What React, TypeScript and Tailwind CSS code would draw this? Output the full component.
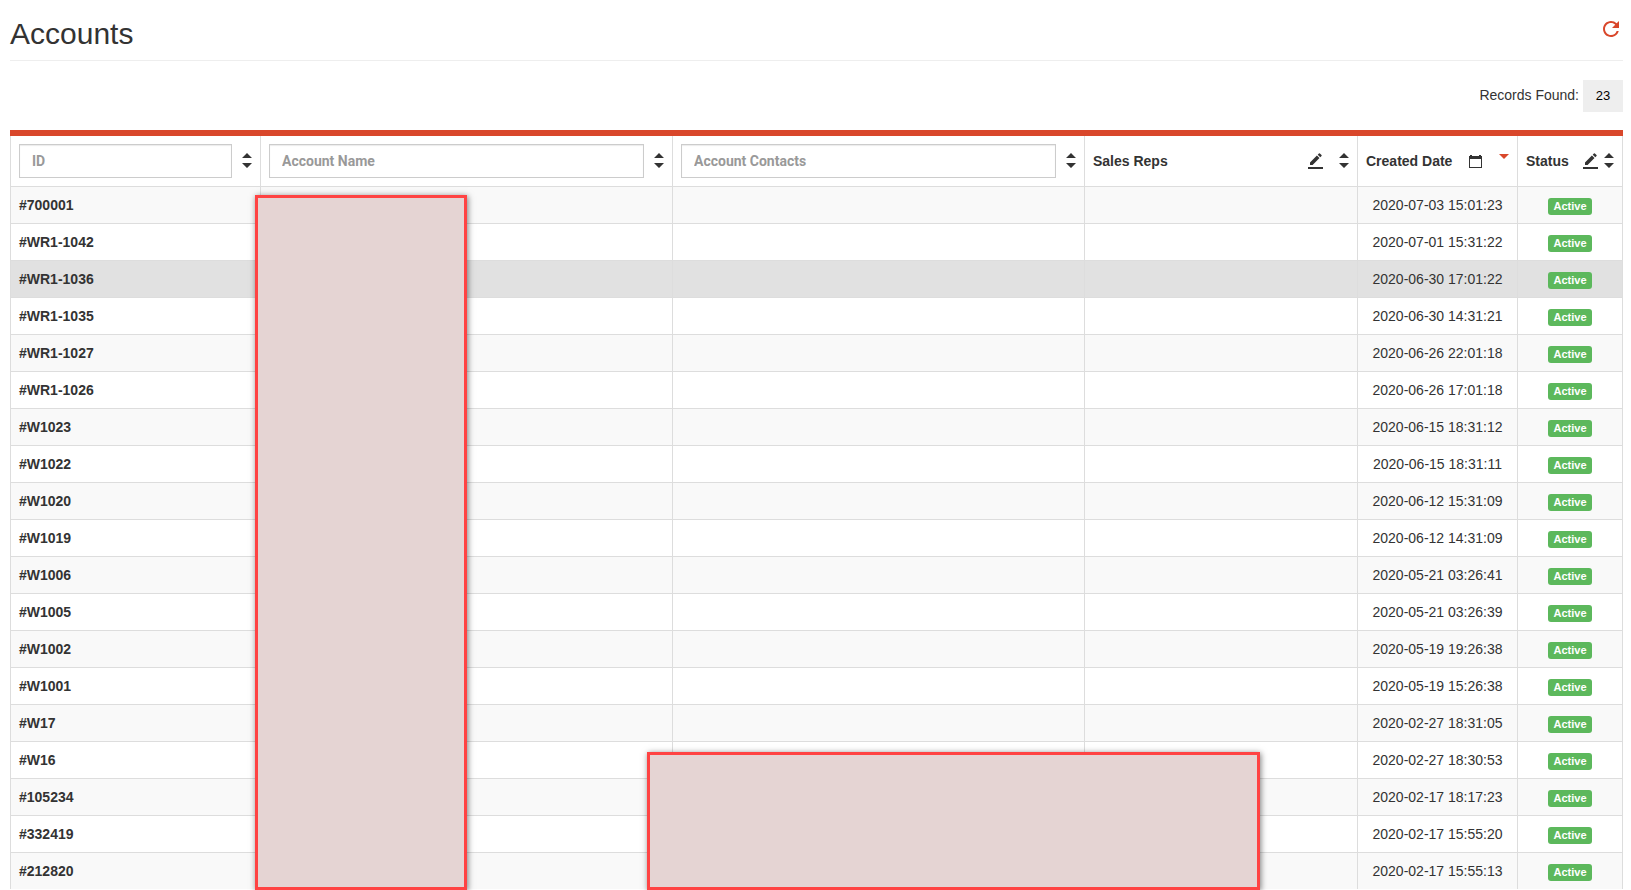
import { useState } from "react";
import { MdRefresh } from "react-icons/md";

const accounts = [
  { id: "#700001", created: "2020-07-03 15:01:23" },
  { id: "#WR1-1042", created: "2020-07-01 15:31:22" },
  { id: "#WR1-1036", created: "2020-06-30 17:01:22" },
  { id: "#WR1-1035", created: "2020-06-30 14:31:21" },
  { id: "#WR1-1027", created: "2020-06-26 22:01:18" },
  { id: "#WR1-1026", created: "2020-06-26 17:01:18" },
  { id: "#W1023", created: "2020-06-15 18:31:12" },
  { id: "#W1022", created: "2020-06-15 18:31:11" },
  { id: "#W1020", created: "2020-06-12 15:31:09" },
  { id: "#W1019", created: "2020-06-12 14:31:09" },
  { id: "#W1006", created: "2020-05-21 03:26:41" },
  { id: "#W1005", created: "2020-05-21 03:26:39" },
  { id: "#W1002", created: "2020-05-19 19:26:38" },
  { id: "#W1001", created: "2020-05-19 15:26:38" },
  { id: "#W17", created: "2020-02-27 18:31:05" },
  { id: "#W16", created: "2020-02-27 18:30:53" },
  { id: "#105234", created: "2020-02-17 18:17:23" },
  { id: "#332419", created: "2020-02-17 15:55:20" },
  { id: "#212820", created: "2020-02-17 15:55:13" },
];

const SortButton = ({ label }: { label: string }) => (
  <button aria-label={`Sort by ${label}`} className="shrink-0">
    <svg width="10" height="16" viewBox="0 0 10 16" fill="#333">
      <path d="M5 0 10 5H0ZM5 15 10 10H0Z" />
    </svg>
  </button>
);

const EditButton = ({ label }: { label: string }) => (
  <button aria-label={`Filter ${label}`} className="shrink-0">
    <svg width="15" height="16" viewBox="0 0 15 16" fill="#333">
      <path d="M0 14H15V16H0Z" />
      <path d="M2 12V9.4L8.9 2.5 11.5 5.1 4.6 12ZM9.7 1.7 10.9 0.5Q11.4 0 11.9 0.5L13.5 2.1Q14 2.6 13.5 3.1L12.3 4.3Z" />
    </svg>
  </button>
);

// Header cell with a search box
const FilterHead = ({ label }: { label: string }) => {
  const [value, setValue] = useState("");

  return (
    <th className="border-r border-b border-[#ddd] p-2">
      <div className="flex items-center gap-2.5">
        <input
          aria-label={label}
          value={value}
          onChange={(e) => setValue(e.target.value)}
          placeholder={label}
          className="h-[34px] w-full min-w-0 border border-[#ccc] px-3 font-['Roboto',sans-serif] font-bold shadow-[inset_0_1px_1px_rgba(0,0,0,0.08)] placeholder:text-[#999]"
        />
        <SortButton label={label} />
      </div>
    </th>
  );
};

const App = () => {
  return (
    <div className="bg-white pr-2 pl-2.5 font-['Liberation_Sans',Arial,sans-serif] text-sm text-[#333]">
      <header className="flex h-[61px] items-center justify-between border-b border-[#eee]">
        <h1 className="pt-2 text-[30px] leading-9">Accounts</h1>
        <button aria-label="Refresh" className="pb-0.5 text-[#d9472b]">
          <MdRefresh size={24} />
        </button>
      </header>

      <div className="mt-[19px] mb-[18px] flex items-start justify-end gap-1">
        <span className="py-[5px]">Records Found:</span>
        <span className="w-10 bg-[#eee] py-1.5 text-center text-[13px] leading-5 text-black">
          23
        </span>
      </div>

      <div className="relative border-t-[6px] border-[#d9472b] pb-px">
        <table className="w-full table-fixed border-separate border-spacing-0 border-l border-[#ddd]">
          <colgroup>
            <col className="w-[250px]" />
            <col />
            <col />
            <col className="w-[273px]" />
            <col className="w-[160px]" />
            <col className="w-[105px]" />
          </colgroup>
          <thead>
            <tr>
              <FilterHead label="ID" />
              <FilterHead label="Account Name" />
              <FilterHead label="Account Contacts" />
              <th className="border-r border-b border-[#ddd] p-2">
                <div className="flex items-center">
                  <span className="mr-auto">Sales Reps</span>
                  <span className="flex gap-4">
                    <EditButton label="Sales Reps" />
                    <SortButton label="Sales Reps" />
                  </span>
                </div>
              </th>
              <th className="border-r border-b border-[#ddd] p-2">
                <div className="flex items-center gap-4">
                  <span className="mr-auto whitespace-nowrap">Created Date</span>
                  <button aria-label="Pick created date" className="shrink-0">
                    <svg width="14" height="16" viewBox="0 0 14 16" fill="#333">
                      <path
                        fillRule="evenodd"
                        d="M1 2H3V3H10V2H12V3H13V15H0V3H1ZM1 6V14H12V6Z"
                      />
                    </svg>
                  </button>
                  <button aria-label="Sort by Created Date" className="shrink-0">
                    <svg width="10" height="16" viewBox="0 0 10 16" fill="#d9472b">
                      <path d="M0 1H10L5 6Z" />
                    </svg>
                  </button>
                </div>
              </th>
              <th className="border-r border-b border-[#ddd] p-2">
                <div className="flex items-center">
                  <span className="mr-auto">Status</span>
                  <span className="flex gap-1.5">
                    <EditButton label="Status" />
                    <SortButton label="Status" />
                  </span>
                </div>
              </th>
            </tr>
          </thead>
          <tbody className="[&_td]:h-[37px] [&_td]:border-r [&_td]:border-b [&_td]:border-[#ddd] [&_td]:px-2 [&_tr:last-child_td]:h-9 [&_tr:last-child_td]:border-b-0">
            {accounts.map((a, i) => (
              <tr
                key={a.id}
                className={i === 2 ? "bg-[#e1e1e1]" : "odd:bg-[#f9f9f9]"}
              >
                <td className="font-bold">{a.id}</td>
                <td />
                <td />
                <td />
                <td className="text-center whitespace-nowrap">{a.created}</td>
                <td className="text-center">
                  <span className="inline-block rounded-[3px] bg-[#5cb85c] px-[5px] text-[11px] leading-[17px] font-bold text-white">
                    Active
                  </span>
                </td>
              </tr>
            ))}
          </tbody>
        </table>

        {/* Redacted areas */}
        <div className="absolute top-[59px] bottom-0 left-[245px] w-[212px] border-[3px] border-[#ff4343] bg-[#e5d4d3] shadow-[1px_1px_6px_rgba(0,0,0,0.5)]" />
        <div className="absolute right-[363px] bottom-0 left-[637px] h-[138px] border-[3px] border-[#ff4343] bg-[#e5d4d3] shadow-[1px_1px_6px_rgba(0,0,0,0.5)]" />
      </div>
    </div>
  );
};

export default App;
